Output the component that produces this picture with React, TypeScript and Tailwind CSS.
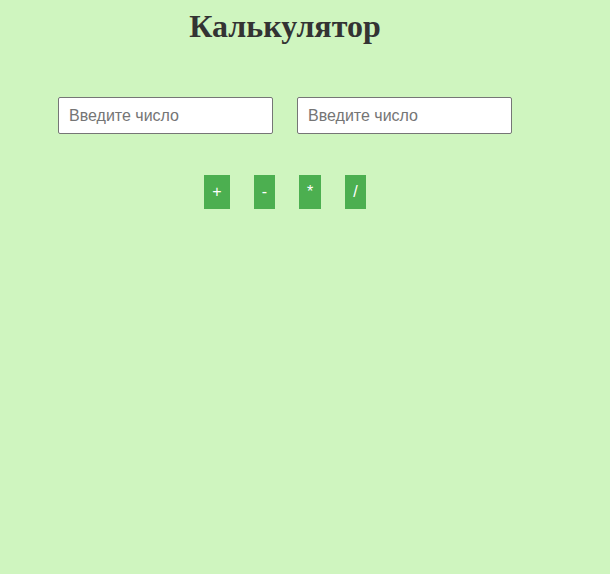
export default function App() {
  const ops = ["+", "-", "*", "/"];
  return (
    <div className="min-h-[574px] w-full bg-[#cff5bf]">
      <div className="w-[570px] flex flex-col items-center pt-[8px]">
        <h1 className="font-['Liberation_Serif',serif] text-[32px] leading-[36px] font-bold text-[#333333]">
          Калькулятор
        </h1>

        <div className="mt-[53px] flex gap-[24px]">
          <input
            type="text"
            placeholder="Введите число"
            className="w-[215px] h-[37px] px-[10px] border border-[#767676] rounded-[2px] bg-white font-['Liberation_Sans',sans-serif] text-[16px] text-black placeholder:text-[#757575] outline-none"
          />
          <input
            type="text"
            placeholder="Введите число"
            className="w-[215px] h-[37px] px-[10px] border border-[#767676] rounded-[2px] bg-white font-['Liberation_Sans',sans-serif] text-[16px] text-black placeholder:text-[#757575] outline-none"
          />
        </div>

        <div className="mt-[41px] flex gap-[24px]">
          {ops.map((op) => (
            <button
              key={op}
              className="h-[34px] px-[8px] bg-[#4caf50] text-white font-['Liberation_Sans',sans-serif] text-[16px] leading-[18px]"
            >
              {op}
            </button>
          ))}
        </div>
      </div>
    </div>
  );
}
